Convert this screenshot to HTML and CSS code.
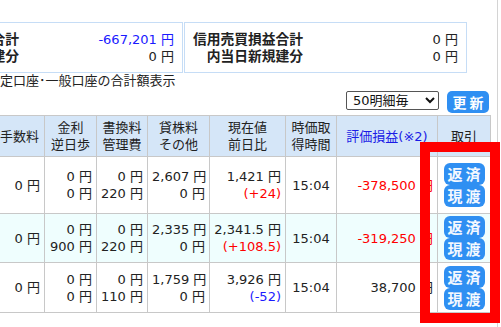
FILE: index.html
```html
<!DOCTYPE html>
<html lang="ja">
<head>
<meta charset="utf-8">
<title>信用建玉一覧</title>
<link rel="stylesheet" href="styles.css">
</head>
<body>
<div class="page">
  <div class="summary">
    <div class="sum-box">
      <div class="sum-label">信用評価損益合計</div><div class="sum-value minus-blue">-667,201 円</div>
      <div class="sum-label">内当日新規建分</div><div class="sum-value">0 円</div>
    </div>
    <div class="sum-box">
      <div class="sum-label">信用売買損益合計</div><div class="sum-value">0 円</div>
      <div class="sum-label">内当日新規建分</div><div class="sum-value">0 円</div>
    </div>
  </div>
  <div class="caption">特定口座･一般口座の合計額表示</div>
  <div class="toolbar">
    <select class="per-page">
      <option>50明細毎</option>
      <option>100明細毎</option>
    </select>
    <button class="refresh">更新</button>
  </div>
  <table class="positions">
    <colgroup>
      <col class="c-fee"><col class="c-int"><col class="c-rew"><col class="c-lend"><col class="c-price"><col class="c-time"><col class="c-pl"><col class="c-act">
    </colgroup>
    <thead>
      <tr class="r-head">
        <th>手数料</th>
        <th>金利<br>逆日歩</th>
        <th>書換料<br>管理費</th>
        <th>貸株料<br>その他</th>
        <th>現在値<br>前日比</th>
        <th>時価取<br>得時間</th>
        <th class="link">評価損益(※2)</th>
        <th>取引</th>
      </tr>
    </thead>
    <tbody>
      <tr class="r1">
        <td>0 円</td>
        <td>0 円<br>0 円</td>
        <td>0 円<br>220 円</td>
        <td>2,607 円<br>0 円</td>
        <td>1,421 円<br><span class="up">(+24)</span></td>
        <td class="time">15:04</td>
        <td class="pl up">-378,500 円</td>
        <td class="act"><div class="btn-stack"><button class="btn">返済</button><button class="btn">現渡</button></div></td>
      </tr>
      <tr class="r2 alt">
        <td>0 円</td>
        <td>0 円<br>900 円</td>
        <td>0 円<br>220 円</td>
        <td>2,335 円<br>0 円</td>
        <td>2,341.5 円<br><span class="up">(+108.5)</span></td>
        <td class="time">15:04</td>
        <td class="pl up">-319,250 円</td>
        <td class="act"><div class="btn-stack"><button class="btn">返済</button><button class="btn">現渡</button></div></td>
      </tr>
      <tr class="r3">
        <td>0 円</td>
        <td>0 円<br>0 円</td>
        <td>0 円<br>110 円</td>
        <td>1,759 円<br>0 円</td>
        <td>3,926 円<br><span class="down">(-52)</span></td>
        <td class="time">15:04</td>
        <td class="pl">38,700 円</td>
        <td class="act"><div class="btn-stack"><button class="btn">返済</button><button class="btn">現渡</button></div></td>
      </tr>
    </tbody>
  </table>
</div>
<div class="annot"></div>
</body>
</html>
```
FILE: styles.css
```css
* { box-sizing: border-box; }
html, body { margin: 0; padding: 0; }
body {
  width: 501px;
  height: 327px;
  overflow: hidden;
  position: relative;
  background: #fff;
  color: #222;
  font-family: "DejaVu Sans", "Noto Sans CJK JP", sans-serif;
  font-size: 13px;
}
.page {
  margin-left: -100px;
  width: 598px;
  min-height: 327px;
  padding-top: 22px;
  border-right: 1px solid #d4d4d4;
}
.summary { display: flex; gap: 1px; }
.sum-box {
  width: 283px;
  height: 51px;
  border: 1px solid #c6ddf6;
  padding: 8px 8px 0 8px;
  display: grid;
  grid-template-columns: auto 1fr;
  grid-auto-rows: 17px;
  line-height: 17px;
}
.sum-label { font-weight: bold; text-align: right; font-size: 13.75px; white-space: nowrap; }
.sum-value { text-align: right; white-space: nowrap; }
.minus-blue { color: #1a1aff; }
.caption {
  margin-left: 87px;
  line-height: 15px;
  height: 15px;
  white-space: nowrap;
}
.toolbar {
  width: 589px;
  display: flex;
  justify-content: flex-end;
  align-items: flex-start;
  gap: 8px;
  padding-top: 3px;
}
.per-page {
  width: 93px;
  height: 19px;
  font-family: "DejaVu Sans", "Noto Sans CJK JP", sans-serif;
  font-size: 13px;
  color: #111;
  border: 1px solid #555;
  border-radius: 2px;
  background: #fff;
  padding: 0 2px;
}
.refresh {
  width: 42px;
  height: 22px;
  border: 0;
  border-radius: 5px;
  background: #2f8ff2;
  color: #fff;
  font-family: "Noto Sans CJK JP", sans-serif;
  font-weight: bold;
  font-size: 14px;
  line-height: 22px;
  letter-spacing: 3px;
  padding: 0 0 0 3px;
}
.positions {
  margin-top: 2px;
  margin-left: 94px;
  width: 496px;
  border-collapse: collapse;
  table-layout: fixed;
}
.c-fee { width: 50px; }
.c-int { width: 52px; }
.c-rew { width: 51px; }
.c-lend { width: 62px; }
.c-price { width: 76px; }
.c-time { width: 51px; }
.c-pl { width: 101px; }
.c-act { width: 53px; }
.positions th, .positions td {
  border: 1px solid #c8c8c8;
  line-height: 17px;
  padding: 0 4px;
  white-space: nowrap;
}
.positions th {
  background: #d5e6f8;
  font-weight: normal;
  text-align: center;
}
.positions th.link { color: #1a1ae6; }
.positions td { text-align: right; vertical-align: middle; }
.r-head { height: 41px; }
.r1 { height: 57px; }
.r2 { height: 49px; }
.r3 { height: 50px; }
.alt td { background: #effefe; }
.positions td.time { text-align: center; }
.up { color: #f00; }
.down { color: #1a1aff; }
.positions td.act { text-align: center; padding: 0; }
.btn-stack { display: flex; flex-direction: column; align-items: center; }
.btn {
  display: block;
  width: 41px;
  height: 22px;
  border: 0;
  border-radius: 6px;
  background: #2f8ff2;
  color: #f4f8ff;
  font-family: "Noto Sans CJK JP", sans-serif;
  font-weight: bold;
  font-size: 15px;
  line-height: 22px;
  letter-spacing: 3px;
  padding: 0 0 0 3px;
}
.annot {
  position: absolute;
  left: 420px;
  top: 142px;
  width: 80px;
  height: 181px;
  border: 10px solid #ff0000;
}
```
